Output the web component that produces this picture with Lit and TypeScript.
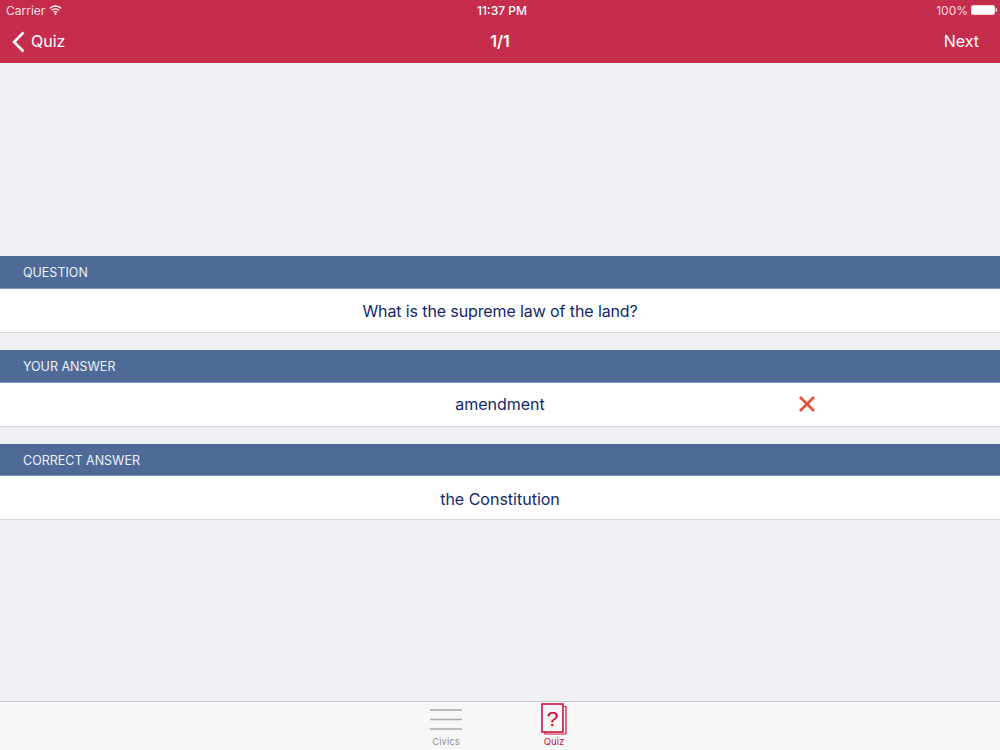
import { LitElement, html, css, svg } from "lit";
import { customElement } from "lit/decorators.js";

@customElement("app-root")
export class AppRoot extends LitElement {
  static styles = css`
    :host { display: flex; flex-direction: column; width: 1000px; height: 750px; background: #efeff4; font-family: Inter, "Liberation Sans", sans-serif; overflow: hidden; }
    .top { background: #c62d4d; color: #fff; height: 63px; flex: none; }
    .status { height: 20px; display: grid; grid-template-columns: minmax(0, 1fr) auto minmax(0, 1fr); align-items: center; padding: 0 2px 0 6px; font-size: 12px; color: #f6dfe4; }
    .status .l, .status .r { display: flex; align-items: center; }
    .status .l { gap: 4px; }
    .status .r { justify-content: flex-end; gap: 3px; }
    .status .c { font-weight: 500; color: #fff; }
    .nav { height: 43px; box-sizing: border-box; display: grid; grid-template-columns: minmax(0, 1fr) auto minmax(0, 1fr); align-items: center; padding: 0 21px 2px; font-size: 16px; }
    .back { display: flex; align-items: center; gap: 6px; margin-left: -9px; }
    .back svg { margin-top: 2px; }
    .title { font-weight: 600; font-size: 16px; }
    .next { justify-self: end; }
    .content { flex: 1; padding-top: 193px; display: flex; flex-direction: column; }
    .head { background: #4e6b98; color: #eef1f6; height: 33px; flex: none; display: flex; align-items: center; padding-left: 23px; font-size: 12.5px; box-sizing: border-box; border-bottom: 1px solid #7f97bb; }
    .head.short { height: 32px; padding-top: 1px; }
    .row { background: #fff; height: 44px; flex: none; box-sizing: border-box; border-bottom: 1px solid #d8d8dc; display: flex; align-items: center; justify-content: center; color: #12296b; font-size: 16px; position: relative; margin-bottom: 17px; }
    .row.tight { letter-spacing: -0.11px; }
    .row.icon { padding-bottom: 2px; }
    .row.low { padding-top: 3px; }
    .row svg { position: absolute; left: 798px; top: 12px; }
    .tabs { height: 48px; flex: none; background: #f7f7f8; border-top: 1px solid #c9c9ce; display: flex; justify-content: center; gap: 78px; }
    .tab { width: 30px; display: flex; flex-direction: column; align-items: center; font-size: 9.5px; color: #929292; position: relative; }
    .tab.on { color: #c6133f; }
    .tab svg { flex: none; margin-top: 1px; height: 33px; }
    .tab span { white-space: nowrap; }
  `;

  private section(label: string, answer: string, cls = "", headCls = "", wrong = false) {
    return html`<div class="head ${headCls}">${label}</div>
      <div class="row ${cls}">${answer}${wrong
        ? html`<svg width="18" height="18" viewBox="0 0 18 18">${svg`<path d="M2 2 L16 16 M16 2 L2 16" stroke="#e8503a" stroke-width="2.8" fill="none"/>`}</svg>`
        : ""}</div>`;
  }

  render() {
    return html`
      <div class="top">
        <div class="status">
          <div class="l"><span>Carrier</span>
            <svg width="13" height="10" viewBox="0 0 13 10">${svg`<g fill="none" stroke="#fff" stroke-width="1.3"><path d="M.8 3.4a8 8 0 0 1 11.4 0"/><path d="M2.8 5.4a5.2 5.2 0 0 1 7.4 0"/><path d="M4.7 7.3a2.5 2.5 0 0 1 3.6 0"/></g><circle cx="6.5" cy="8.9" r="1" fill="#fff"/>`}</svg>
          </div>
          <div class="c">11:37 PM</div>
          <div class="r"><span>100%</span>
            <svg width="27" height="10" viewBox="0 0 27 10">${svg`<rect x=".5" y=".5" width="23" height="9" rx="1.5" fill="#fff" stroke="#f3d5dc"/><rect x="24.5" y="3.3" width="1.6" height="3.4" fill="#f3d5dc"/>`}</svg>
          </div>
        </div>
        <div class="nav">
          <div class="back">
            <svg width="13" height="22" viewBox="0 0 13 22">${svg`<path d="M11.5 1.5 L2 11 L11.5 20.5" fill="none" stroke="#fff" stroke-width="2.6"/>`}</svg>
            <span>Quiz</span>
          </div>
          <div class="title">1/1</div>
          <div class="next">Next</div>
        </div>
      </div>
      <div class="content">
        ${this.section("QUESTION", "What is the supreme law of the land?", "tight")}
        ${this.section("YOUR ANSWER", "amendment", "icon", "", true)}
        ${this.section("CORRECT ANSWER", "the Constitution", "low", "short")}
      </div>
      <div class="tabs">
        <div class="tab">
          <svg width="32" height="33" viewBox="0 0 32 33">${svg`<path d="M0 7H32M0 16.5H32M0 26H32" stroke="#a9a9a9" stroke-width="1.6" fill="none"/>`}</svg>
          <span>Civics</span>
        </div>
        <div class="tab on">
          <svg width="26" height="33" viewBox="0 0 26 33">${svg`<path d="M22.5 3.5H25V31H4V29" fill="none" stroke="#c6133f" stroke-width="1.2"/><rect x="1" y="1" width="21" height="28" fill="#f7f7f8" stroke="#c6133f" stroke-width="1.6"/><text x="11.5" y="22.5" text-anchor="middle" font-size="21" fill="#c6133f" stroke="#c6133f" stroke-width=".25" font-family="Liberation Sans">?</text>`}</svg>
          <span>Quiz</span>
        </div>
      </div>
    `;
  }
}
